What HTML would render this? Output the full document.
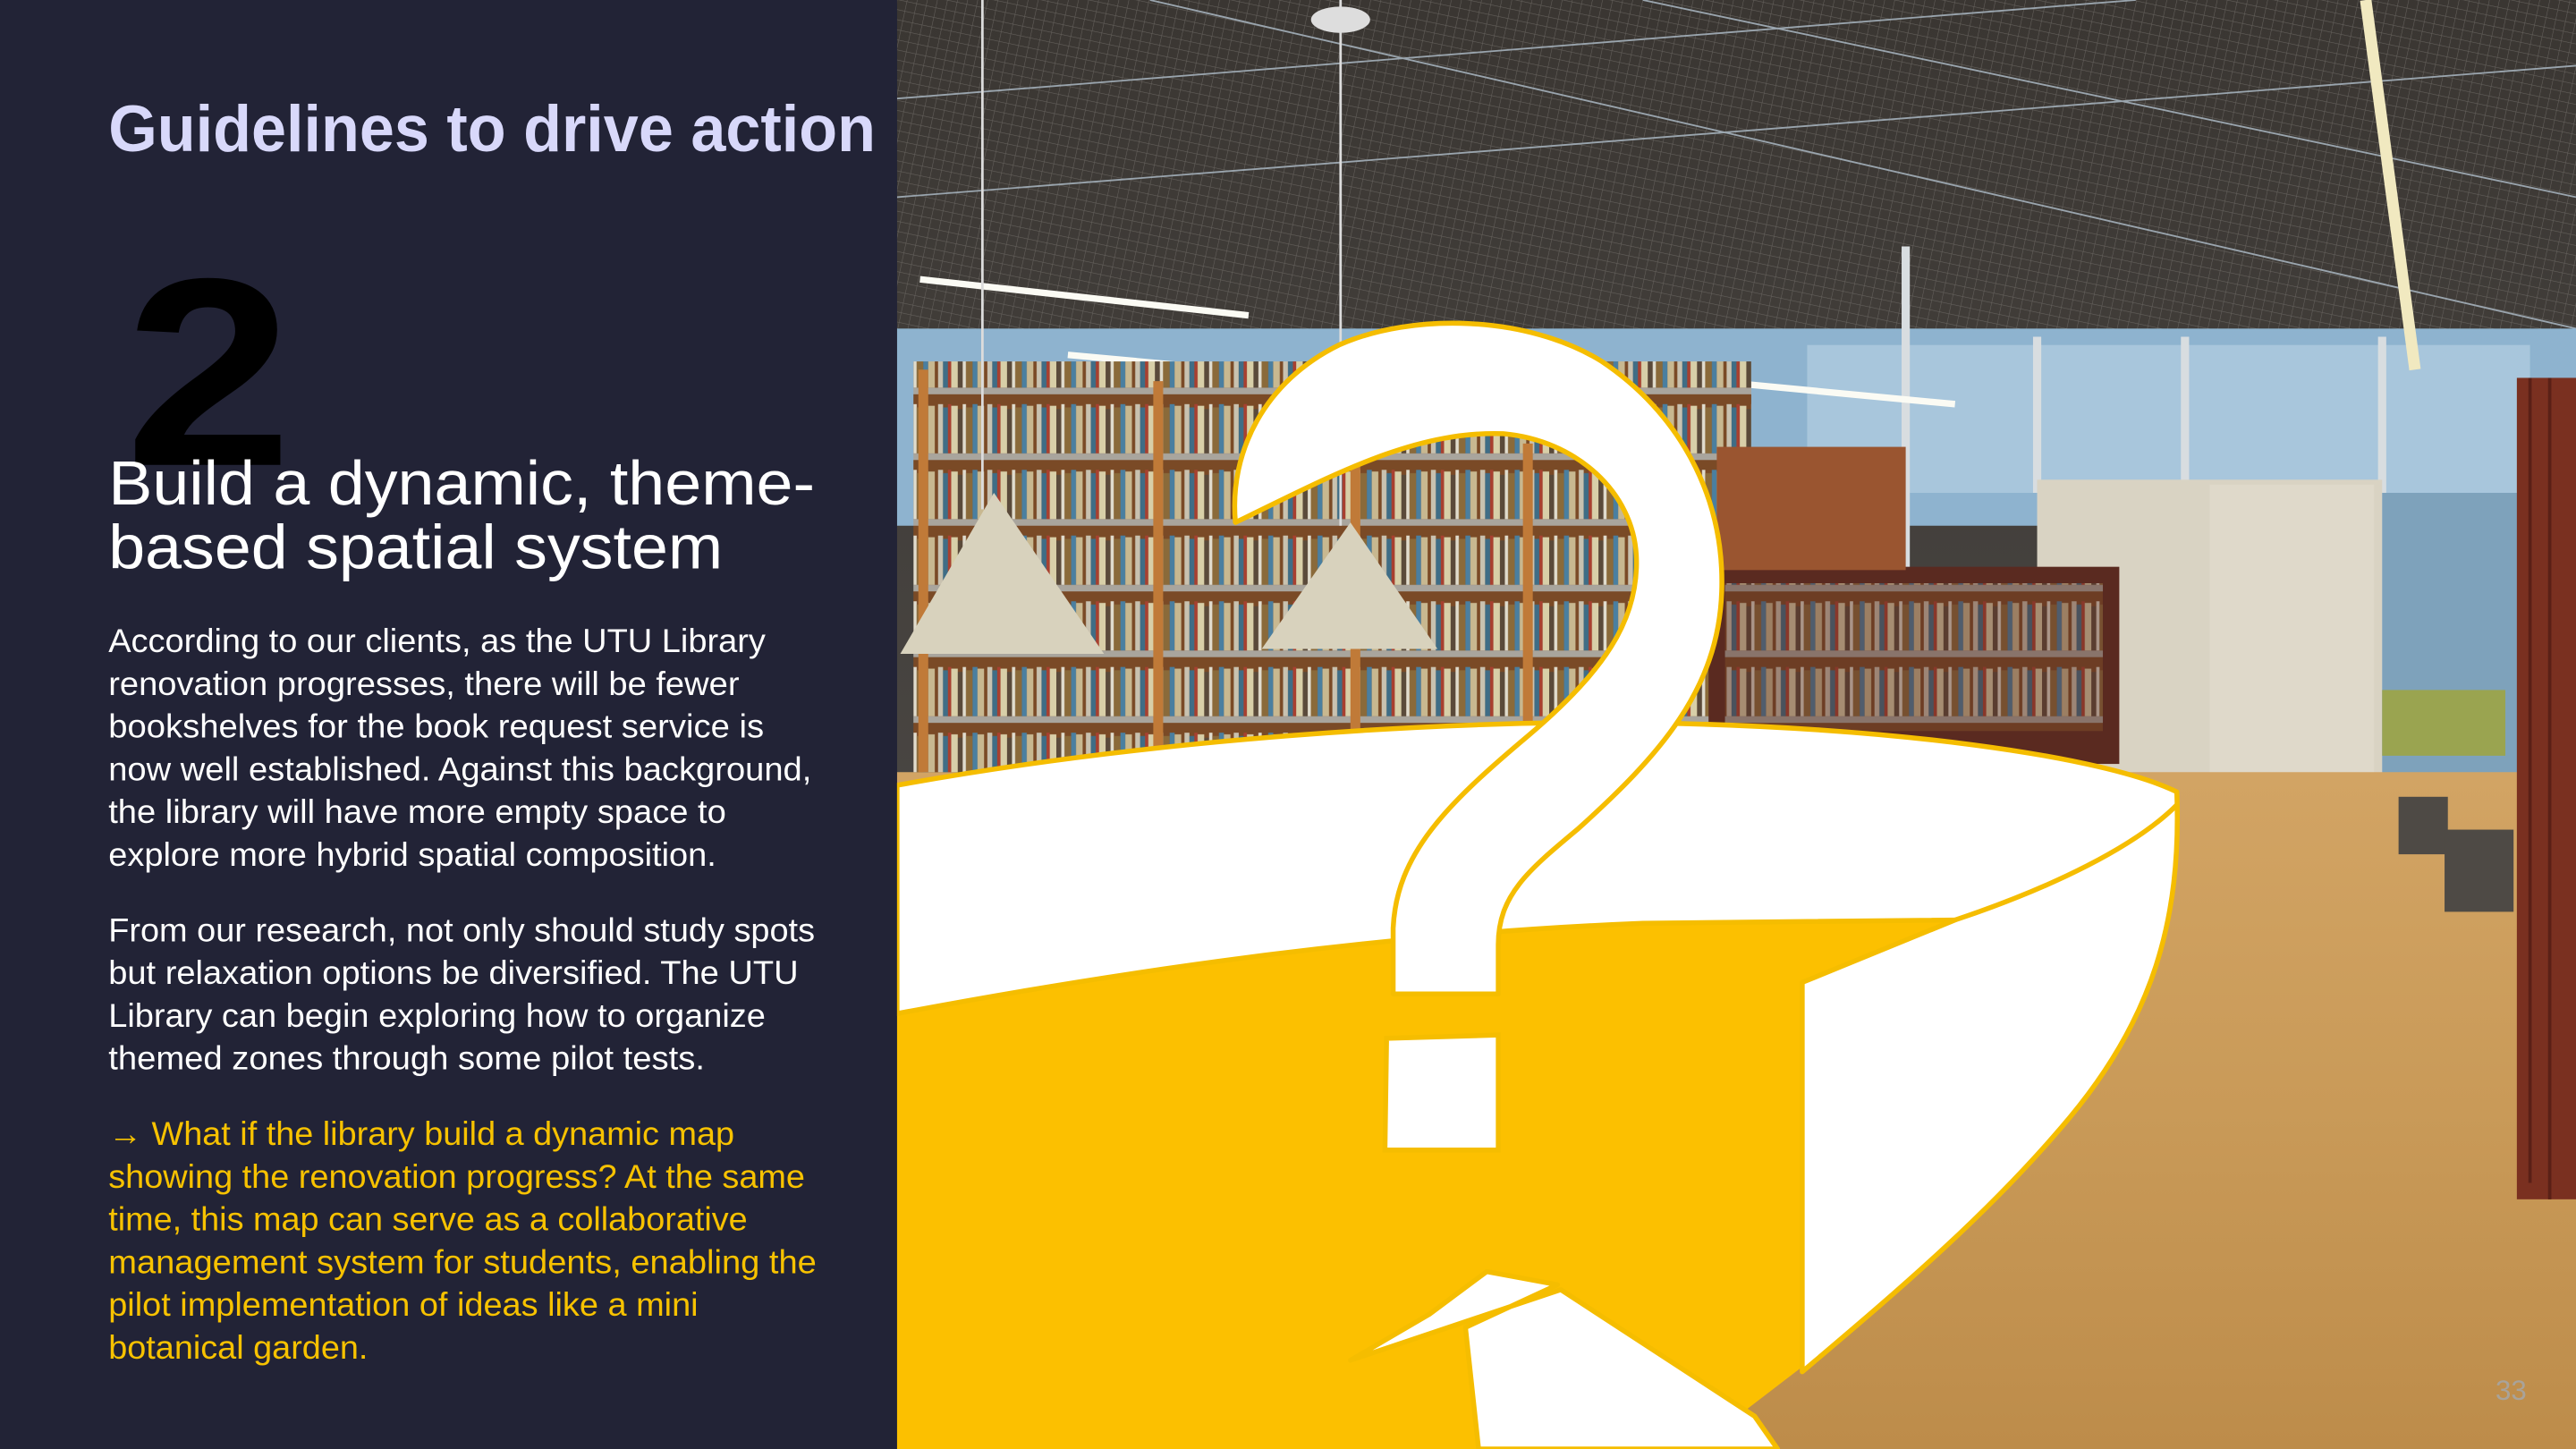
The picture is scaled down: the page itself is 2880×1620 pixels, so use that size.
<!DOCTYPE html>
<html><head><meta charset="utf-8"><style>
html,body{margin:0;padding:0;background:#222336;}
svg{display:block}
text{font-family:"Liberation Sans",sans-serif}
</style></head><body>
<svg width="2880" height="1620" viewBox="0 0 1568 882" xmlns="http://www.w3.org/2000/svg">
<defs>
<linearGradient id="floor" x1="0" y1="0" x2="0" y2="1"><stop offset="0" stop-color="#d2a464"/><stop offset="0.5" stop-color="#c99a58"/><stop offset="1" stop-color="#bd8c4a"/></linearGradient>
<linearGradient id="ceil" x1="0" y1="0" x2="0" y2="1"><stop offset="0" stop-color="#3a3632"/><stop offset="1" stop-color="#55524f"/></linearGradient>
<pattern id="grid" width="6" height="6" patternUnits="userSpaceOnUse" patternTransform="rotate(12)"><path d="M0 0H6M0 0V6" stroke="#6f6b66" stroke-width="0.6"/></pattern>
<pattern id="books" width="30" height="40" patternUnits="userSpaceOnUse"><rect width="30" height="40" fill="#7a4a26"/><rect x="1" y="6" width="3" height="30" fill="#c9c2b0"/><rect x="4" y="8" width="3" height="28" fill="#3f6d86"/><rect x="7" y="6" width="2" height="30" fill="#a84030"/><rect x="9" y="7" width="4" height="29" fill="#d8cfa8"/><rect x="13" y="9" width="3" height="27" fill="#5a4a3a"/><rect x="16" y="6" width="2" height="30" fill="#e0dccd"/><rect x="18" y="8" width="4" height="28" fill="#8a6a3a"/><rect x="22" y="6" width="3" height="30" fill="#4a7fa0"/><rect x="25" y="7" width="4" height="29" fill="#c8b890"/><rect y="36" width="30" height="4" fill="#a9a59d"/></pattern>
</defs>
<rect width="1568" height="882" fill="#222336"/>
<g>
<rect x="546" y="0" width="1022" height="882" fill="url(#ceil)"/>
<rect x="546" y="0" width="1022" height="230" fill="url(#grid)" opacity="0.8"/>
<path d="M546 120 L1568 40 M546 60 L1300 0 M700 0 L1568 200 M1000 0 L1568 120" stroke="#9aa5ae" stroke-width="1"/>
<rect x="546" y="200" width="1022" height="120" fill="#8eb3cf"/>
<rect x="1100" y="210" width="440" height="90" fill="#a8c6dc"/>
<path d="M1240 205V300M1330 205V300M1450 205V520M1160 150V350" stroke="#d8dde0" stroke-width="5"/>
<rect x="1240" y="292" width="210" height="228" fill="#d9d3c3"/>
<rect x="1345" y="295" width="100" height="222" fill="#dfd9ca"/>
<rect x="1450" y="300" width="90" height="220" fill="#7ea2bb"/>
<rect x="546" y="470" width="1022" height="412" fill="url(#floor)"/>
<path d="M560 170L760 192M650 216L780 228M1000 228L1190 246" stroke="#fbfbf4" stroke-width="4"/>
<path d="M1440 0L1470 225" stroke="#f1e9c0" stroke-width="7"/>
<rect x="556" y="220" width="510" height="250" fill="url(#books)"/>
<path d="M562 225V470M705 232V470M825 260V470M930 270V470M1000 280V470" stroke="#c07a38" stroke-width="6"/>
<rect x="1040" y="345" width="250" height="120" fill="#5a2a20"/>
<rect x="1050" y="355" width="230" height="90" fill="url(#books)" opacity="0.6"/>
<rect x="1045" y="272" width="115" height="75" fill="#9a5530"/>
<rect x="1532" y="230" width="36" height="500" fill="#7a3020"/>
<path d="M1540 230V720M1552 230V730" stroke="#5a2016" stroke-width="2"/>
<path d="M598 0V310M816 0V320" stroke="#dcdcdc" stroke-width="1.5"/>
<polygon points="605,300 548,398 672,398" fill="#d8d2bd"/>
<polygon points="822,318 768,395 875,395" fill="#d8d2bd"/>
<ellipse cx="816" cy="12" rx="18" ry="8" fill="#ddd"/>
<rect x="1460" y="485" width="30" height="35" fill="#4e4a45"/>
<rect x="1488" y="505" width="42" height="50" fill="#4e4a45"/>
<rect x="1450" y="420" width="75" height="40" fill="#9aa450"/>
</g>
<path d="M546 617 C700 588 850 568 1000 562 L1190 560 L1097 598 L1097 832 L1050 868 L1080 882 L546 882 Z" fill="#fcc000"/>
<path d="M546 478 C700 450 880 438 1000 440 C1150 442 1280 460 1325 482 C1328 560 1310 620 1260 680 C1210 740 1150 790 1097 835 L1097 598 L1190 560 L1000 562 C850 568 700 588 546 617 Z" fill="#fff" stroke="#f5bd00" stroke-width="3" stroke-linejoin="round"/>
<path d="M1190 560 C1250 540 1300 515 1325 490" fill="none" stroke="#f5bd00" stroke-width="3"/>
<path d="M752 318 C748 275 770 232 815 210 C860 190 930 192 975 220 C1020 250 1050 300 1048 360 C1046 420 1010 460 960 505 C930 530 912 545 912 575 L912 605 L848 605 L848 565 C850 520 880 490 930 448 C975 410 998 378 996 338 C994 300 960 268 915 264 C860 262 810 290 752 318 Z" fill="#fff" stroke="#f5bd00" stroke-width="3" stroke-linejoin="round"/>
<path d="M844 632 L912 630 L912 700 L843 700 Z" fill="#fff" stroke="#f5bd00" stroke-width="3"/>
<path d="M822 828 L870 800 L905 774 L948 782 L892 808 L900 882 L1082 882 L1068 862 L950 785 Z" fill="#fff" stroke="#f5bd00" stroke-width="3" stroke-linejoin="round"/>
<text x="1519" y="852" font-size="17" fill="#a9a39a">33</text>
<rect x="0" y="0" width="546" height="882" fill="#222336"/>
<text x="66" y="92" font-size="40" font-weight="bold" fill="#d8d8fa" textLength="467" lengthAdjust="spacingAndGlyphs">Guidelines to drive action</text>
<text x="76" y="283" font-size="163" font-weight="bold" fill="#000" textLength="102" lengthAdjust="spacingAndGlyphs">2</text>
<g font-size="38" fill="#fff">
<text x="66" y="307" textLength="430" lengthAdjust="spacingAndGlyphs">Build a dynamic, theme-</text>
<text x="66" y="346" textLength="374" lengthAdjust="spacingAndGlyphs">based spatial system</text>
</g>
<g font-size="20" fill="#fff">
<text x="66" y="397" textLength="400" lengthAdjust="spacingAndGlyphs">According to our clients, as the UTU Library</text>
<text x="66" y="423" textLength="384" lengthAdjust="spacingAndGlyphs">renovation progresses, there will be fewer</text>
<text x="66" y="449" textLength="399" lengthAdjust="spacingAndGlyphs">bookshelves for the book request service is</text>
<text x="66" y="475" textLength="428" lengthAdjust="spacingAndGlyphs">now well established. Against this background,</text>
<text x="66" y="501" textLength="376" lengthAdjust="spacingAndGlyphs">the library will have more empty space to</text>
<text x="66" y="527" textLength="370" lengthAdjust="spacingAndGlyphs">explore more hybrid spatial composition.</text>
<text x="66" y="573" textLength="430" lengthAdjust="spacingAndGlyphs">From our research, not only should study spots</text>
<text x="66" y="599" textLength="420" lengthAdjust="spacingAndGlyphs">but relaxation options be diversified. The UTU</text>
<text x="66" y="625" textLength="400" lengthAdjust="spacingAndGlyphs">Library can begin exploring how to organize</text>
<text x="66" y="651" textLength="363" lengthAdjust="spacingAndGlyphs">themed zones through some pilot tests.</text>
</g>
<g font-size="20" fill="#f7c200">
<text x="66" y="697" textLength="381" lengthAdjust="spacingAndGlyphs">→ What if the library build a dynamic map</text>
<text x="66" y="723" textLength="424" lengthAdjust="spacingAndGlyphs">showing the renovation progress? At the same</text>
<text x="66" y="749" textLength="389" lengthAdjust="spacingAndGlyphs">time, this map can serve as a collaborative</text>
<text x="66" y="775" textLength="431" lengthAdjust="spacingAndGlyphs">management system for students, enabling the</text>
<text x="66" y="801" textLength="359" lengthAdjust="spacingAndGlyphs">pilot implementation of ideas like a mini</text>
<text x="66" y="827" textLength="158" lengthAdjust="spacingAndGlyphs">botanical garden.</text>
</g>
</svg>
</body></html>
